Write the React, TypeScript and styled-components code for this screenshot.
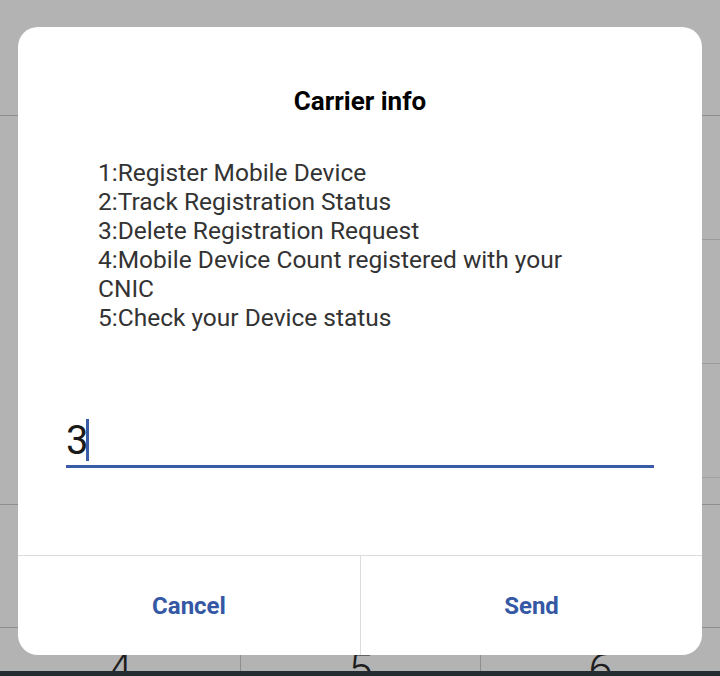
import React from "react";
import styled, { createGlobalStyle } from "styled-components";

const GlobalStyle = createGlobalStyle`
  html, body {
    margin: 0;
    padding: 0;
    background: #b3b3b3;
    overflow: hidden;
  }
  * {
    box-sizing: border-box;
  }
`;

const Screen = styled.div`
  position: relative;
  width: 720px;
  height: 676px;
  overflow: hidden;
  background: #b3b3b3;
  font-family: Roboto, "Liberation Sans", sans-serif;
`;

const Backdrop = styled.div`
  display: flex;
  flex-direction: column;
  height: 100%;
`;

const Band = styled.div<{ $h: number; $inset?: number; $tone?: string }>`
  height: ${(p) => p.$h}px;
  margin-left: ${(p) => p.$inset || 0}px;
  border-bottom: 1px solid ${(p) => p.$tone || "#8e8e8e"};
  flex-shrink: 0;
`;

const KeyRow = styled.div`
  display: grid;
  grid-template-columns: repeat(3, 1fr);
  height: 43px;
  flex-shrink: 0;
  overflow: hidden;
`;

const Key = styled.div`
  display: flex;
  justify-content: center;
  padding-top: 20px;
  font-size: 44px;
  line-height: 44px;
  font-weight: 300;
  color: #1e1e1e;
  & + & {
    border-left: 1px solid #8e8e8e;
  }
`;

const NavBar = styled.div`
  flex: 1;
  background: #252d31;
`;

const Dialog = styled.div`
  position: absolute;
  top: 27px;
  left: 18px;
  width: 684px;
  height: 628px;
  border-radius: 20px;
  background: #ffffff;
  display: flex;
  flex-direction: column;
  overflow: hidden;
`;

const Title = styled.h2`
  margin: 0;
  padding-top: 60px;
  font-size: 26px;
  line-height: 28px;
  font-weight: 700;
  color: #000;
  text-align: center;
`;

const Message = styled.div`
  margin: 43px 0 0 80px;
  width: 500px;
  font-size: 24.5px;
  line-height: 29px;
  color: #333333;
  white-space: pre-line;
`;

const Field = styled.div`
  display: flex;
  align-items: flex-end;
  margin: auto 48px 0 48px;
  padding-bottom: 4px;
  border-bottom: 3px solid #3a5ba5;
`;

const FieldValue = styled.span`
  font-size: 40px;
  line-height: 40px;
  letter-spacing: -3px;
  color: #1a1a1a;
`;

const Caret = styled.span`
  width: 3px;
  height: 42px;
  margin-left: 1px;
  background: #3a5ba5;
`;

const Actions = styled.div`
  display: grid;
  grid-template-columns: 1fr 1fr;
  height: 100px;
  margin-top: 87px;
  border-top: 1px solid #dcdcdc;
  flex-shrink: 0;
`;

const ActionButton = styled.button`
  border: none;
  background: transparent;
  font-family: inherit;
  font-size: 24px;
  font-weight: 700;
  color: #3558a5;
  padding: 0;
  & + & {
    border-left: 1px solid #dcdcdc;
  }
`;

const menu = `1:Register Mobile Device
2:Track Registration Status
3:Delete Registration Request
4:Mobile Device Count registered with your CNIC
5:Check your Device status`;

export default function App() {
  return (
    <>
      <GlobalStyle />
      <Screen>
        <Backdrop>
          <Band $h={116} />
          <Band $h={124} $inset={40} $tone="#9a9a9a" />
          <Band $h={124} $inset={40} $tone="#9a9a9a" />
          <Band $h={114} $inset={40} $tone="#a2a2a2" />
          <Band $h={27} />
          <Band $h={123} />
          <KeyRow>
            <Key>4</Key>
            <Key>5</Key>
            <Key>6</Key>
          </KeyRow>
          <NavBar />
        </Backdrop>
        <Dialog>
          <Title>Carrier info</Title>
          <Message>{menu}</Message>
          <Field>
            <FieldValue>3</FieldValue>
            <Caret />
          </Field>
          <Actions>
            <ActionButton>Cancel</ActionButton>
            <ActionButton>Send</ActionButton>
          </Actions>
        </Dialog>
      </Screen>
    </>
  );
}
